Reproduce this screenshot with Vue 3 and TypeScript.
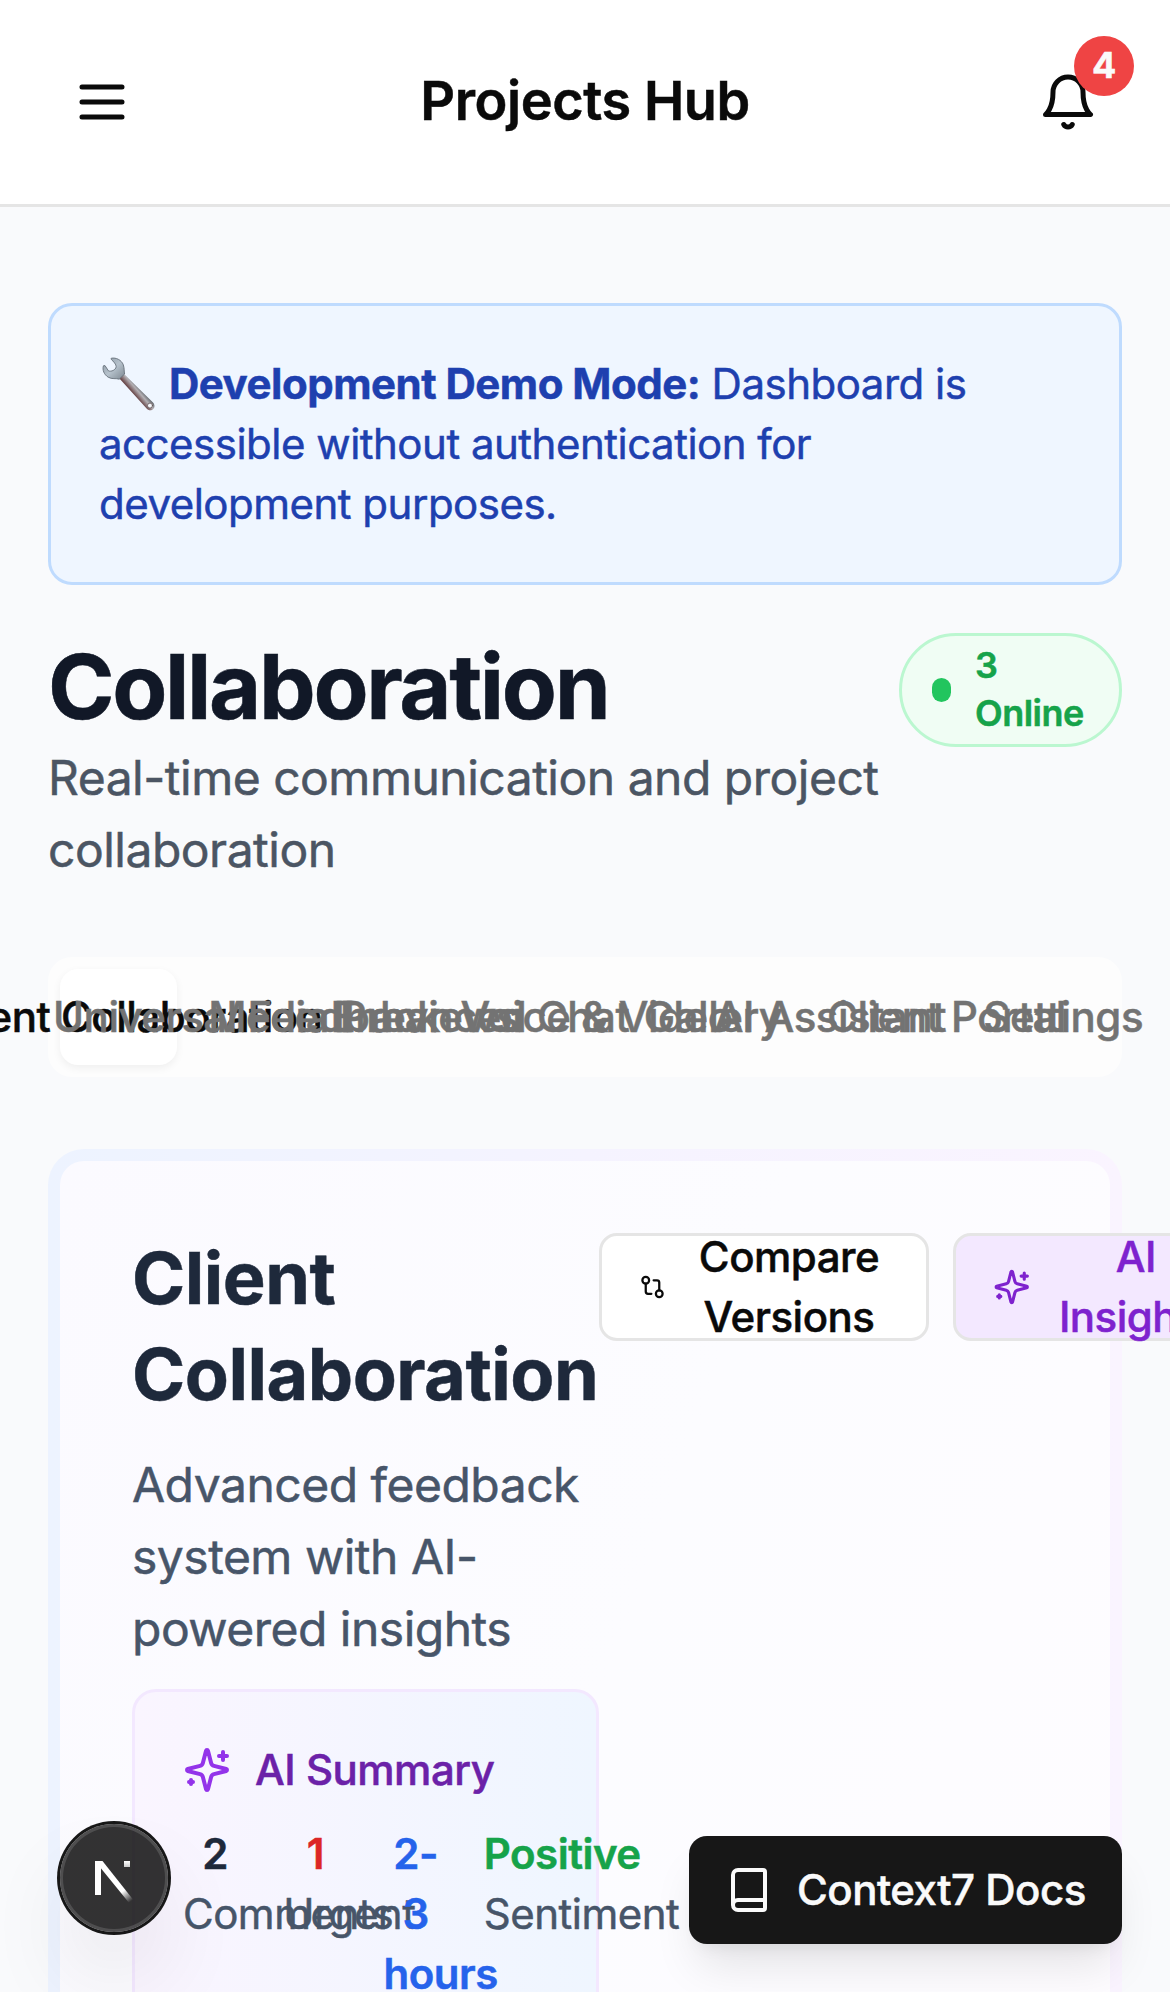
<script setup lang="ts">
interface Stat {
  value: string
  label: string
  tone: string
}

const tabs: string[] = [
  'Client Collaboration',
  'Universal Feedback',
  'Media Previews',
  'Enhanced Chat',
  'Voice & Video',
  'Gallery',
  'AI Assistant',
  'Client Portal',
  'Settings',
]
const activeTab = 'Client Collaboration'

const stats: Stat[] = [
  { value: '2', label: 'Comments', tone: 'slate' },
  { value: '1', label: 'Urgent', tone: 'red' },
  { value: '2-3 hours', label: 'Est. Time', tone: 'blue' },
  { value: 'Positive', label: 'Sentiment', tone: 'green' },
]
</script>

<template>
  <div class="page">
    <header class="topbar">
      <button class="icon-btn" aria-label="Menu">
        <svg class="icon-lg" viewBox="0 0 24 24"><path d="M4 6h16M4 12h16M4 18h16" /></svg>
      </button>
      <div class="app-name">Projects Hub</div>
      <button class="icon-btn" aria-label="Notifications">
        <svg class="icon-lg" viewBox="0 0 24 24">
          <path d="M6 8a6 6 0 0 1 12 0c0 7 3 9 3 9H3s3-2 3-9" />
          <path d="M10.3 21a1.94 1.94 0 0 0 3.4 0" />
        </svg>
        <span class="count">4</span>
      </button>
    </header>

    <main class="main">
      <section class="notice">
        <svg class="wrench" viewBox="0 0 54 54">
          <defs>
            <linearGradient id="wrench-head" x1="0" y1="0" x2="1" y2="1">
              <stop offset="0" stop-color="#8b98a3" />
              <stop offset="0.5" stop-color="#b6c2cc" />
              <stop offset="1" stop-color="#7d8891" />
            </linearGradient>
            <linearGradient id="wrench-arm" gradientUnits="userSpaceOnUse" x1="38" y1="30" x2="31" y2="36">
              <stop offset="0" stop-color="#5d6268" />
              <stop offset="0.45" stop-color="#b3b0b4" />
              <stop offset="1" stop-color="#6b4a4c" />
            </linearGradient>
          </defs>
          <path d="M16.5 20.5 21.5 16.5 51 45.5C53.5 48.2 52.6 52 49.8 53 47.8 53.6 45.8 53 44.6 51.4Z" fill="url(#wrench-arm)" />
          <path d="M9.5 1.2C14 .2 19.5 3 21.3 7.8 22.5 11.5 22 14.5 22.6 17L17.2 22.2C14 21 10 22.5 6.2 20.2 2 17.5.2 13 1.4 8.8L3 8.6 6.4 13.8C9.5 15 13.5 13 14.2 9.8 14.4 7.5 11.5 4.5 9.4 2.5Z" fill="url(#wrench-head)" stroke="#66717b" stroke-width="0.9" />
          <circle cx="48" cy="48.6" r="2.5" fill="#f4f7fb" stroke="#635457" stroke-width="0.8" />
        </svg>
        <strong>Development Demo Mode:</strong> Dashboard is accessible without authentication for
        development purposes.
      </section>

      <section class="heading">
        <div class="heading-text">
          <h1>Collaboration</h1>
          <p>Real-time communication and project collaboration</p>
        </div>
        <div class="online"><i class="dot"></i><span>3 Online</span></div>
      </section>

      <nav class="tabs">
        <button v-for="tab in tabs" :key="tab" class="tab" :class="{ active: tab === activeTab }">
          <span>{{ tab }}</span>
        </button>
      </nav>

      <section class="frame">
        <div class="card">
          <div class="intro">
            <h2>Client Collaboration</h2>
            <p>Advanced feedback system with AI-powered insights</p>
            <div class="summary">
              <div class="summary-title">
                <svg class="icon-md" viewBox="0 0 24 24">
                  <path d="M9.937 15.5A2 2 0 0 0 8.5 14.063l-6.135-1.582a.5.5 0 0 1 0-.962L8.5 9.936A2 2 0 0 0 9.937 8.5l1.582-6.135a.5.5 0 0 1 .963 0L14.063 8.5A2 2 0 0 0 15.5 9.937l6.135 1.581a.5.5 0 0 1 0 .964L15.5 14.063a2 2 0 0 0-1.437 1.437l-1.582 6.135a.5.5 0 0 1-.963 0z" />
                  <path d="M20 3v4M22 5h-4M4 17v2M5 18H3" />
                </svg>
                <span>AI Summary</span>
              </div>
              <div class="stats">
                <div v-for="s in stats" :key="s.label" class="stat">
                  <div class="value" :class="s.tone">{{ s.value }}</div>
                  <div class="label">{{ s.label }}</div>
                </div>
              </div>
            </div>
          </div>
          <div class="actions">
            <button class="action compare">
              <svg class="icon-compare" viewBox="0 0 24 24">
                <circle cx="18" cy="18" r="3" />
                <circle cx="6" cy="6" r="3" />
                <path d="M13 6h3a2 2 0 0 1 2 2v7M11 18H8a2 2 0 0 1-2-2V9" />
              </svg>
              <span>Compare Versions</span>
            </button>
            <button class="action insights">
              <svg class="icon-insights" viewBox="0 0 24 24">
                <path d="M9.937 15.5A2 2 0 0 0 8.5 14.063l-6.135-1.582a.5.5 0 0 1 0-.962L8.5 9.936A2 2 0 0 0 9.937 8.5l1.582-6.135a.5.5 0 0 1 .963 0L14.063 8.5A2 2 0 0 0 15.5 9.937l6.135 1.581a.5.5 0 0 1 0 .964L15.5 14.063a2 2 0 0 0-1.437 1.437l-1.582 6.135a.5.5 0 0 1-.963 0z" />
                <path d="M20 3v4M22 5h-4M4 17v2M5 18H3" />
              </svg>
              <span>AI Insights</span>
            </button>
          </div>
        </div>
      </section>
    </main>

    <div class="dev-badge">
      <svg viewBox="0 0 40 44">
        <defs>
          <linearGradient id="n-diagonal" gradientUnits="userSpaceOnUse" x1="24" y1="26" x2="36" y2="42">
            <stop offset="0" stop-color="#fff" />
            <stop offset="0.35" stop-color="#fff" />
            <stop offset="1" stop-color="#fff" stop-opacity="0" />
          </linearGradient>
          <linearGradient id="n-stem" x1="0" y1="0" x2="0" y2="1">
            <stop offset="0" stop-color="#fff" />
            <stop offset="1" stop-color="#fff" stop-opacity="0.75" />
          </linearGradient>
        </defs>
        <path d="M1 1H7V35H1Z" fill="#fff" />
        <path d="M1 1H8.5L39 39.5 35.5 43.5Z" fill="url(#n-diagonal)" />
        <path d="M30 1H36V7H30Z" fill="url(#n-stem)" />
      </svg>
    </div>

    <button class="docs">
      <svg class="icon-md" viewBox="0 0 24 24">
        <path d="M4 19.5v-15A2.5 2.5 0 0 1 6.5 2H19a1 1 0 0 1 1 1v18a1 1 0 0 1-1 1H6.5a1 1 0 0 1 0-5H20" />
      </svg>
      <span>Context7 Docs</span>
    </button>
  </div>
</template>

<style>
body {
  margin: 0;
  overflow: hidden;
}
</style>

<style scoped>
.page {
  position: relative;
  width: 1170px;
  height: 1992px;
  overflow: hidden;
  background: #f9fafc;
  color: #0a0a0a;
  font-family: Inter, 'Noto Sans', sans-serif;
  font-size: 42px;
  line-height: 60px;
  letter-spacing: -0.5px;
  -webkit-text-stroke: 0.5px currentColor;
}
.page *,
.page *::before {
  box-sizing: border-box;
}
button {
  border: 0;
  padding: 0;
  background: none;
  color: inherit;
  font: inherit;
  letter-spacing: inherit;
}
h1,
h2,
p {
  margin: 0;
}
svg {
  display: block;
  flex-shrink: 0;
  fill: none;
  stroke: currentColor;
  stroke-width: 2;
  stroke-linecap: round;
  stroke-linejoin: round;
}
.icon-lg {
  width: 60px;
  height: 60px;
}
.icon-md {
  width: 48px;
  height: 48px;
}

.topbar {
  display: flex;
  align-items: center;
  justify-content: space-between;
  height: 207px;
  padding: 0 48px;
  border-bottom: 3px solid #e5e5e5;
  background: #fff;
}
.icon-btn {
  position: relative;
  display: flex;
  align-items: center;
  justify-content: center;
  width: 108px;
  height: 108px;
}
.app-name {
  padding-bottom: 3px;
  font-size: 54px;
  font-weight: 600;
  letter-spacing: -0.42px;
}
.count {
  position: absolute;
  top: -12px;
  right: -12px;
  width: 60px;
  height: 60px;
  border-radius: 50%;
  background: #ef4444;
  color: #fafafa;
  font-size: 36px;
  font-weight: 700;
  line-height: 58px;
  text-align: center;
}

.main {
  padding: 96px 48px 0;
}
.notice {
  height: 282px;
  padding: 48px;
  border: 3px solid #bfdbfe;
  border-radius: 24px;
  background: #eff6ff;
  color: #1e40af;
}
.notice strong {
  font-weight: 700;
}
.wrench {
  display: inline-block;
  width: 54px;
  height: 54px;
  margin: -6px 13px -12px 3px;
  stroke: none;
}

.heading {
  display: flex;
  align-items: flex-start;
  justify-content: space-between;
  margin-top: 48px;
}
.heading-text {
  width: 851px;
  height: 252px;
}
h1 {
  color: #111827;
  font-size: 90px;
  font-weight: 700;
  line-height: 108px;
  letter-spacing: -2.36px;
}
.heading p,
.intro p {
  color: #4b5563;
  font-size: 48px;
  line-height: 72px;
}
.heading p {
  margin-top: 1px;
}
.online {
  display: flex;
  align-items: center;
  gap: 24px;
  width: 223px;
  height: 114px;
  padding: 6px 30px;
  border: 3px solid #bbf7d0;
  border-radius: 57px;
  background: #f0fdf4;
  color: #16a34a;
  font-size: 36px;
  font-weight: 600;
  line-height: 48px;
}
.online span {
  padding-bottom: 2px;
}
.dot {
  flex: none;
  width: 19px;
  height: 24px;
  border-radius: 10px;
  background: #22c55e;
}

.tabs {
  display: grid;
  grid-template-columns: repeat(9, minmax(0, 1fr));
  height: 120px;
  margin-top: 72px;
  padding: 12px;
  border-radius: 24px;
  background: #fdfdfd;
  color: #737373;
}
.tab {
  display: flex;
  align-items: center;
  justify-content: center;
  gap: 23px;
  border-radius: 18px;
  font-weight: 500;
  white-space: nowrap;
}
.tab::before {
  content: '';
  width: 0;
}
.tab.active {
  background: #fff;
  color: #0a0a0a;
  box-shadow: 0 3px 9px rgba(0, 0, 0, 0.06);
}

.frame {
  height: 1200px;
  margin-top: 72px;
  padding: 12px;
  border-radius: 36px;
  background: linear-gradient(90deg, #edf3ff, #f5f3ff 50%, #faf4ff);
}
.card {
  display: flex;
  align-items: flex-start;
  height: 100%;
  padding: 72px;
  border-radius: 24px;
  background: linear-gradient(110deg, #fbfaff, #fcfcff 50%, #fefcff);
}
.intro {
  flex: none;
  width: 467px;
}
h2 {
  margin-top: -3px;
  color: #1e293b;
  font-size: 72px;
  font-weight: 700;
  line-height: 96px;
}
.intro p {
  margin-top: 27px;
  color: #475569;
}
.summary {
  height: 480px;
  margin-top: 24px;
  padding: 48px;
  border: 3px solid #f3e8ff;
  border-radius: 24px;
  background: linear-gradient(90deg, #faf5ff, #eff6ff);
}
.summary-title {
  display: flex;
  align-items: center;
  gap: 24px;
  color: #6b21a8;
  font-weight: 500;
}
.summary-title svg {
  color: #9333ea;
}
.stats {
  display: grid;
  grid-template-columns: repeat(4, minmax(0, 1fr));
  gap: 36px;
  margin-top: 24px;
  text-align: center;
}
.value {
  font-weight: 600;
}
.slate {
  color: #1e293b;
}
.red {
  color: #dc2626;
}
.blue {
  color: #2563eb;
}
.green {
  color: #16a34a;
}
.label {
  color: #475569;
}
.actions {
  display: flex;
  flex: none;
  gap: 24px;
}
.action {
  display: flex;
  align-items: center;
  height: 108px;
  padding: 0 36px 0 37px;
  border: 3px solid #e5e5e5;
  border-radius: 18px;
  background: #fff;
  font-weight: 500;
  text-align: center;
}
.action span {
  flex: 1;
  margin-left: 22px;
}
.compare {
  width: 330px;
}
.insights {
  width: 305px;
  background: #f3e8ff;
  color: #7e22ce;
}
.icon-compare {
  width: 27px;
  height: 48px;
}
.icon-insights {
  width: 37.5px;
  height: 48px;
}

.dev-badge {
  position: absolute;
  left: 60px;
  top: 1824px;
  width: 108px;
  height: 108px;
  border-radius: 50%;
  background: rgba(0, 0, 0, 0.8);
  box-shadow: 0 0 0 3px #171717, inset 0 0 0 3px rgba(255, 255, 255, 0.14),
    0 48px 96px -24px rgba(0, 0, 0, 0.24);
}
.dev-badge svg {
  width: 40px;
  height: 44px;
  margin: 36px 0 0 34px;
  stroke: none;
}
.docs {
  position: absolute;
  right: 48px;
  top: 1836px;
  display: flex;
  align-items: center;
  gap: 24px;
  width: 433px;
  height: 108px;
  padding: 0 36px;
  border-radius: 18px;
  background: #171717;
  color: #fafafa;
  font-weight: 500;
  white-space: nowrap;
  box-shadow: 0 30px 45px -9px rgba(0, 0, 0, 0.1), 0 12px 18px -12px rgba(0, 0, 0, 0.1);
}
</style>
